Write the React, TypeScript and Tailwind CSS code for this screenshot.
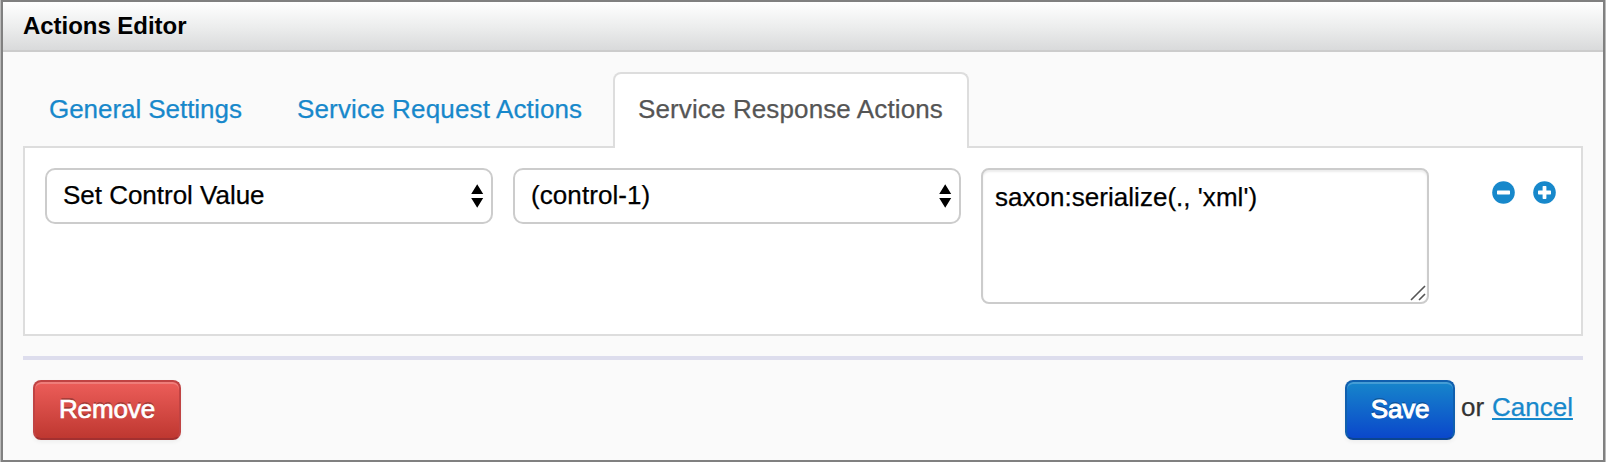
import React from "react";

function SelectBox({ value, className }: { value: string; className: string }) {
  return (
    <div className="relative h-[56px] w-[448px] shrink-0">
      <select
        aria-label={value}
        className={
          "block h-full w-full appearance-none rounded-[10px] border-2 border-[#ccc] bg-white pb-[3px] pl-4 text-[26px] leading-[40px] text-black outline-none [-webkit-text-stroke:0.25px_black] " +
          className
        }
      >
        <option>{value}</option>
      </select>
      <svg className="pointer-events-none absolute top-[16px] right-[9px]" width="13" height="24" viewBox="0 0 13 24">
        <path d="M6.2 0.3 12.2 10H.2Z M.2 14H12.2L6.2 23.7Z" fill="#000" />
      </svg>
    </div>
  );
}

function RoundIcon({ plus = false }: { plus?: boolean }) {
  return (
    <svg width="23" height="23" viewBox="0 0 23 23">
      <circle cx="11.5" cy="11.5" r="11.3" fill="#1788cb" />
      <rect x="5" y="9.6" width="13" height="3.8" rx="0.7" fill="#fff" />
      {plus && <rect x="9.6" y="5" width="3.8" height="13" rx="0.7" fill="#fff" />}
    </svg>
  );
}

export default function App() {
  return (
    <div className="h-[462px] w-[1606px] border-x border-[#bbb] font-['Liberation_Sans',Arial,sans-serif] text-[26px] leading-[40px] text-[#333]">
      <div className="flex h-full flex-col border-2 border-[#808080] bg-[#fafafa]">
        <header className="h-[50px] shrink-0 border-b-2 border-[#ccc] bg-linear-to-b from-white via-[#ebecec] via-55% to-[#d9dadb] pl-5">
          <h1 className="pt-[4px] text-[24px] leading-[40px] font-bold tracking-[-0.04px] text-black">Actions Editor</h1>
        </header>

        <main className="px-5 pt-5">
          <nav className="relative flex h-[76px] text-[#1788cb] [-webkit-text-stroke:0.25px]">
            <a className="ml-[26px] w-[248px] pt-[17px] tracking-[-0.05px]">General Settings</a>
            <a className="w-[316px] pt-[17px] tracking-[0.15px]">Service Request Actions</a>
            <a className="h-[76px] w-[356px] rounded-t-lg border-2 border-b-0 border-[#ddd] bg-white pt-[15px] pl-[23px] tracking-[0.12px] whitespace-nowrap text-[#555]">
              Service Response Actions
            </a>
          </nav>
          <section className="-mt-[2px] flex h-[190px] border-2 border-[#ddd] bg-white pt-5 pl-5">
            <div className="flex gap-5">
              <SelectBox value="Set Control Value" className="tracking-[-0.02px]" />
              <SelectBox value="(control-1)" className="tracking-[0.08px]" />
              <div className="relative h-[136px] w-[448px] shrink-0">
                <textarea
                  aria-label="Value"
                  spellCheck={false}
                  defaultValue="saxon:serialize(., 'xml')"
                  className="block h-full w-full resize-none overflow-hidden rounded-lg border-2 border-[#ccc] bg-white px-3 py-[7px] text-[26px] leading-[40px] tracking-[0.03px] text-black shadow-[inset_0_2px_2px_rgba(0,0,0,0.075)] outline-none [-webkit-text-stroke:0.25px_black]"
                />
                <svg className="absolute right-[3px] bottom-[3px]" width="16" height="16" viewBox="0 0 16 16">
                  <path d="M1 15 15 1M9 15 15 9" stroke="#555" strokeWidth="1.6" />
                </svg>
              </div>
            </div>
            <div className="flex gap-[18px] pt-[13px] pl-[63px]">
              <RoundIcon />
              <RoundIcon plus />
            </div>
          </section>

          <hr className="mt-5 h-1 border-0 bg-[#dddded]" />

          <footer className="flex items-start justify-between px-[10px] pt-5">
            <button className="h-[60px] w-[148px] rounded-lg border-2 border-[#c04343] border-b-[#a33030] bg-linear-to-b/srgb from-[#ee5f5b] to-[#bd362f] bg-origin-border pb-[3px] tracking-[-0.1px] text-white shadow-[inset_0_2px_0_rgba(255,255,255,0.2),0_2px_4px_rgba(0,0,0,0.05)] [-webkit-text-stroke:0.7px_white] [text-shadow:0_-2px_0_rgba(0,0,0,0.25)]">
              Remove
            </button>
            <div className="flex">
              <button className="h-[60px] w-[110px] rounded-lg border-2 border-[#105fae] border-b-[#0b4590] bg-linear-to-b/srgb from-[#1788cb] to-[#0a45cb] bg-origin-border pb-[3px] tracking-[-0.2px] text-white shadow-[inset_0_2px_0_rgba(255,255,255,0.2),0_2px_4px_rgba(0,0,0,0.05)] [-webkit-text-stroke:1px_white] [text-shadow:0_-2px_0_rgba(0,0,0,0.25)]">
                Save
              </button>
              <span className="w-[37px] pt-[7px] pl-[6px] [-webkit-text-stroke:0.25px]">or</span>
              <a className="w-[81px] pt-[7px] text-[#1788cb] underline decoration-2 underline-offset-[2px] [-webkit-text-stroke:0.25px] [text-decoration-skip-ink:none]">
                Cancel
              </a>
            </div>
          </footer>
        </main>
      </div>
    </div>
  );
}
